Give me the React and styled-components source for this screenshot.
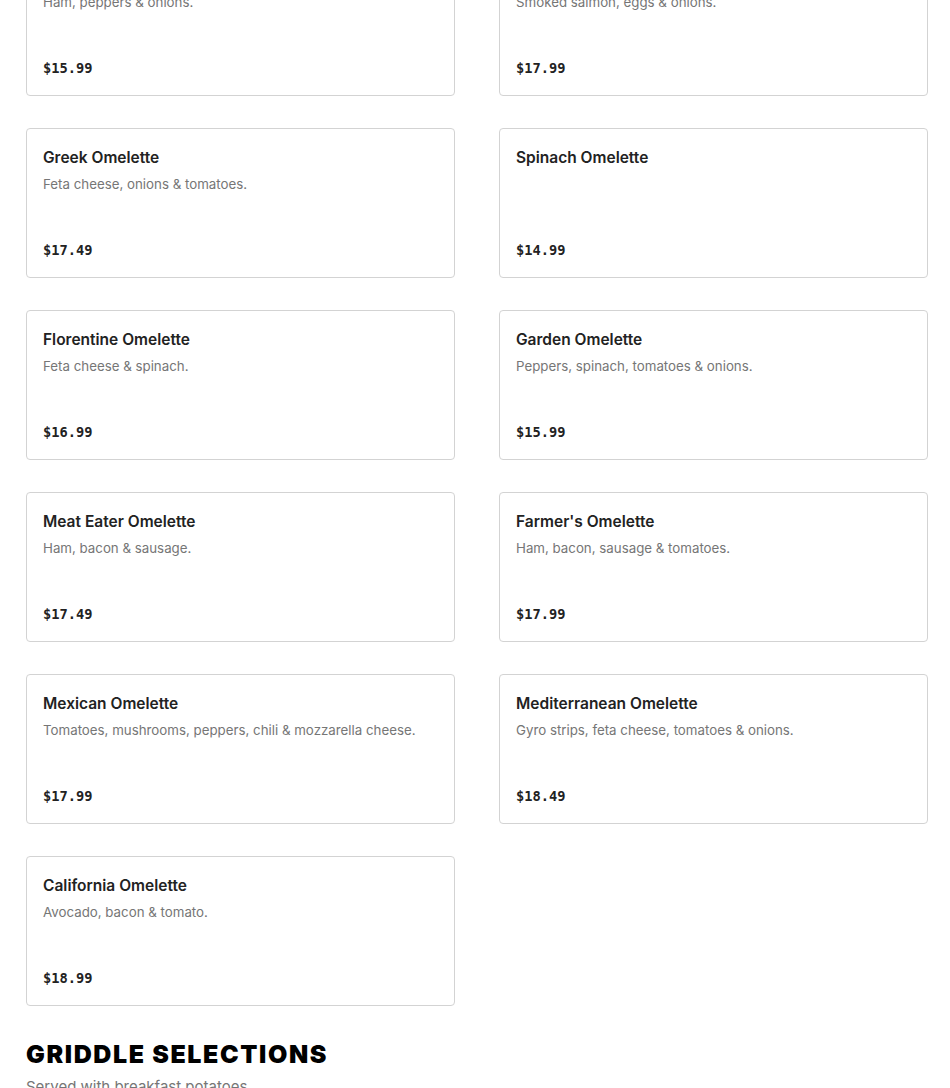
import React from "react"
import styled, { createGlobalStyle } from "styled-components"

const GlobalStyle = createGlobalStyle`
  body {
    margin: 0;
    background: #fff;
    font-family: Inter, "Noto Sans", sans-serif;
    color: #1f1f1f;
  }
`

const Page = styled.div`
  padding: 0 22px 0 26px;
  margin-top: -54px;
`

const Grid = styled.div`
  display: grid;
  grid-template-columns: 429px 429px;
  column-gap: 44px;
  row-gap: 32px;
`

const Card = styled.div`
  box-sizing: border-box;
  height: 150px;
  border: 1px solid #d3d3d3;
  border-radius: 4px;
  padding: 17px 16px 17px 16px;
  display: flex;
  flex-direction: column;
`

const Title = styled.div`
  font-size: 15.5px;
  font-weight: 600;
  line-height: 24px;
  color: #222;
`

const Desc = styled.div`
  font-size: 13.3px;
  line-height: 20px;
  margin-top: 4px;
  color: #767676;
`

const Price = styled.div`
  margin-top: auto;
  font-family: "DejaVu Sans Mono", "Liberation Mono", monospace;
  font-weight: 700;
  font-size: 13.7px;
  line-height: 20px;
  color: #222;
`

const Section = styled.div`
  margin-top: 33px;
`

const Heading = styled.h2`
  margin: 0;
  font-family: Inter, sans-serif;
  font-weight: 900;
  font-size: 25px;
  line-height: 30px;
  letter-spacing: 1.6px;
  color: #000;
`

const Sub = styled.div`
  margin-top: 7px;
  font-size: 15px;
  line-height: 22px;
  color: #767676;
`

const items = [
  { name: "Western Omelette", desc: "Ham, peppers & onions.", price: "$15.99" },
  { name: "Nova Omelette", desc: "Smoked salmon, eggs & onions.", price: "$17.99" },
  { name: "Greek Omelette", desc: "Feta cheese, onions & tomatoes.", price: "$17.49" },
  { name: "Spinach Omelette", desc: "", price: "$14.99" },
  { name: "Florentine Omelette", desc: "Feta cheese & spinach.", price: "$16.99" },
  { name: "Garden Omelette", desc: "Peppers, spinach, tomatoes & onions.", price: "$15.99" },
  { name: "Meat Eater Omelette", desc: "Ham, bacon & sausage.", price: "$17.49" },
  { name: "Farmer's Omelette", desc: "Ham, bacon, sausage & tomatoes.", price: "$17.99" },
  { name: "Mexican Omelette", desc: "Tomatoes, mushrooms, peppers, chili & mozzarella cheese.", price: "$17.99" },
  { name: "Mediterranean Omelette", desc: "Gyro strips, feta cheese, tomatoes & onions.", price: "$18.49" },
  { name: "California Omelette", desc: "Avocado, bacon & tomato.", price: "$18.99" },
]

const App = () => {
  return (
    <>
      <GlobalStyle />
      <Page>
        <Grid>
          {items.map(item => (
            <Card key={item.name}>
              <Title>{item.name}</Title>
              {item.desc && <Desc>{item.desc}</Desc>}
              <Price>{item.price}</Price>
            </Card>
          ))}
        </Grid>
        <Section>
          <Heading>GRIDDLE SELECTIONS</Heading>
          <Sub>Served with breakfast potatoes.</Sub>
        </Section>
      </Page>
    </>
  )
}

export default App
